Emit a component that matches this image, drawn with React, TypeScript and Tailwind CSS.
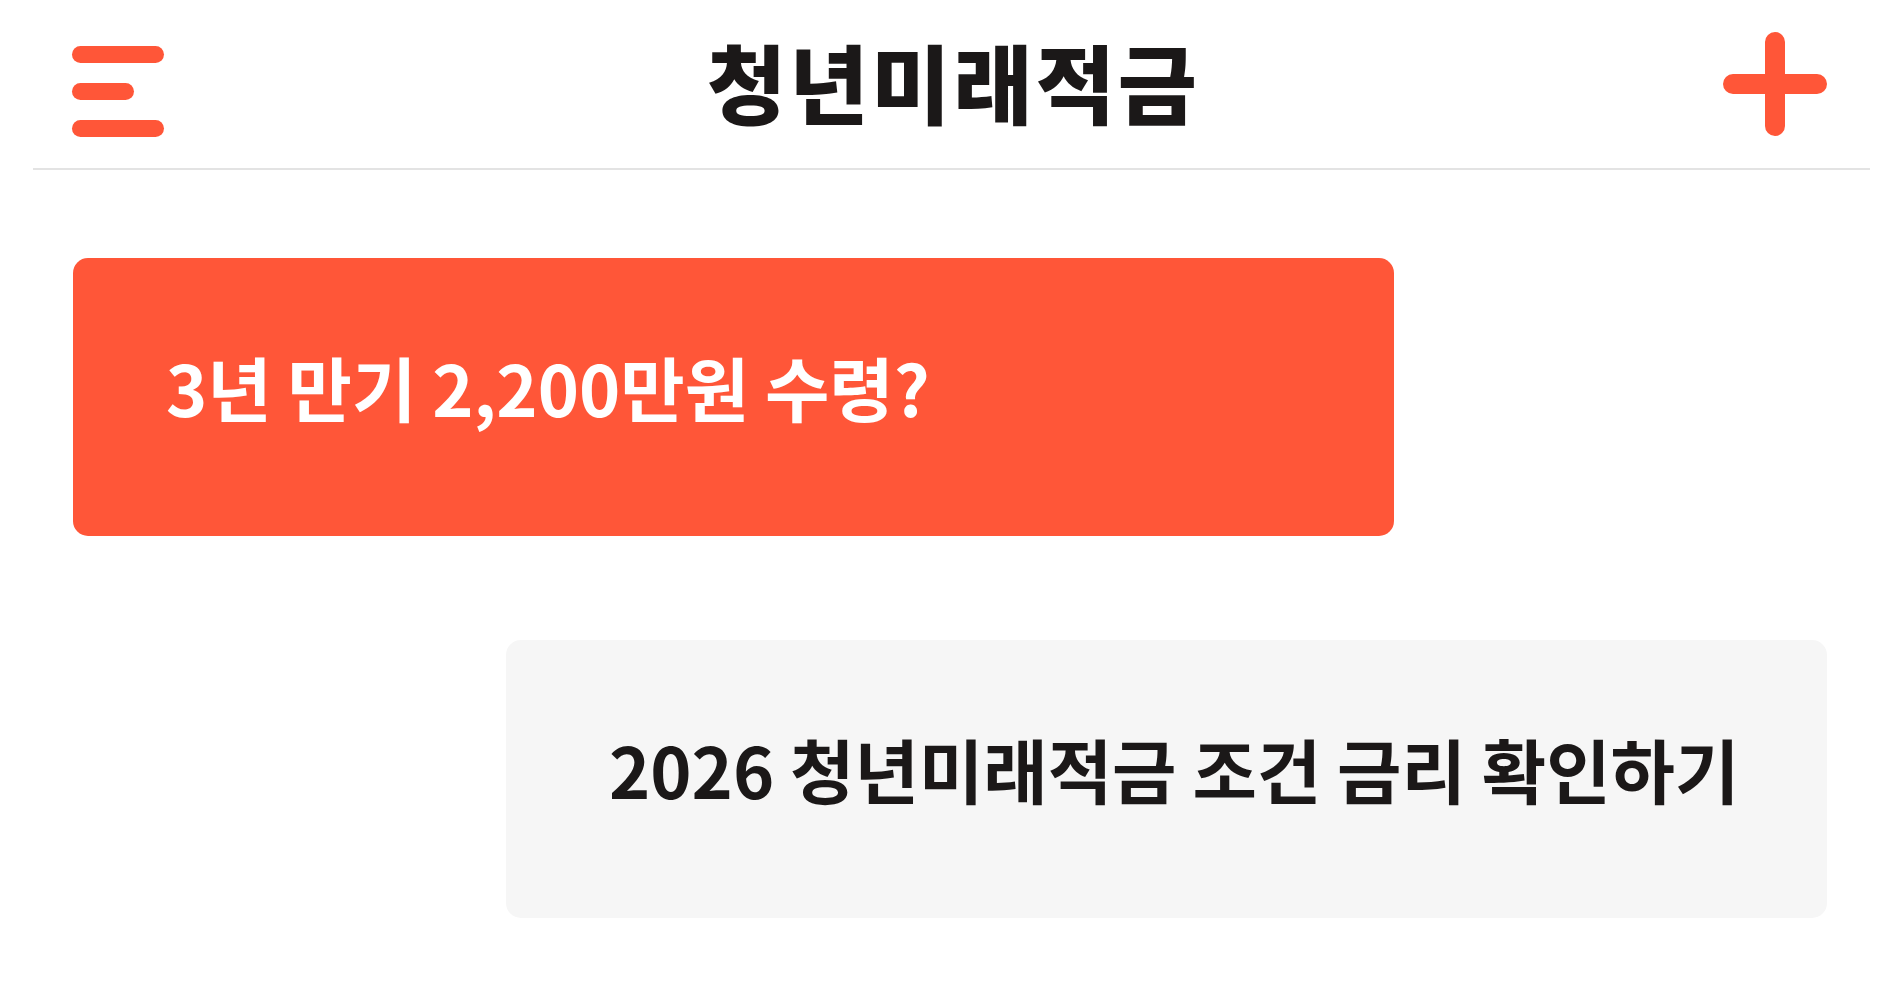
import React from 'react';

const MenuIcon = () => (
  <div className="mt-[14px] flex w-[92px] flex-col gap-[20px]">
    <span className="block h-[17px] w-[92px] rounded-full bg-[#ff5638]" />
    <span className="block h-[17px] w-[62px] rounded-full bg-[#ff5638]" />
    <span className="block h-[17px] w-[92px] rounded-full bg-[#ff5638]" />
  </div>
);

const PlusIcon = () => (
  <svg width="104" height="104" viewBox="0 0 104 104" fill="none">
    <path d="M52 10v84M10 52h84" stroke="#ff5638" strokeWidth="20" strokeLinecap="round" />
  </svg>
);

const App: React.FC = () => {
  return (
    <div className="min-h-screen bg-white font-['Noto_Sans_CJK_KR','Noto_Sans',sans-serif]">
      <header className="ml-[33px] mr-[30px] flex h-[170px] items-center justify-between border-b-2 border-[#e3e3e3] pl-[39px] pr-[43px]">
        <MenuIcon />
        <h1 className="mb-[6px] ml-[20px] text-[86px] font-black leading-none tracking-[0.035em] text-[#1b1818]">
          청년미래적금
        </h1>
        <PlusIcon />
      </header>

      <main className="flex flex-col gap-[104px] px-[73px] pt-[88px]">
        <div className="flex h-[278px] w-[1321px] items-center self-start rounded-[15px] bg-[#ff5638] pb-[20px] pl-[93px]">
          <p className="text-[70px] font-bold leading-none text-white">
            3년 만기 2,200만원 수령?
          </p>
        </div>
        <div className="flex h-[278px] w-[1321px] items-center self-end rounded-[15px] bg-[#f6f6f6] pb-[20px] pl-[103px]">
          <p className="text-[70px] font-bold leading-none text-[#1b1818]">
            2026 청년미래적금 조건 금리 확인하기
          </p>
        </div>
      </main>
    </div>
  );
};

export default App;
